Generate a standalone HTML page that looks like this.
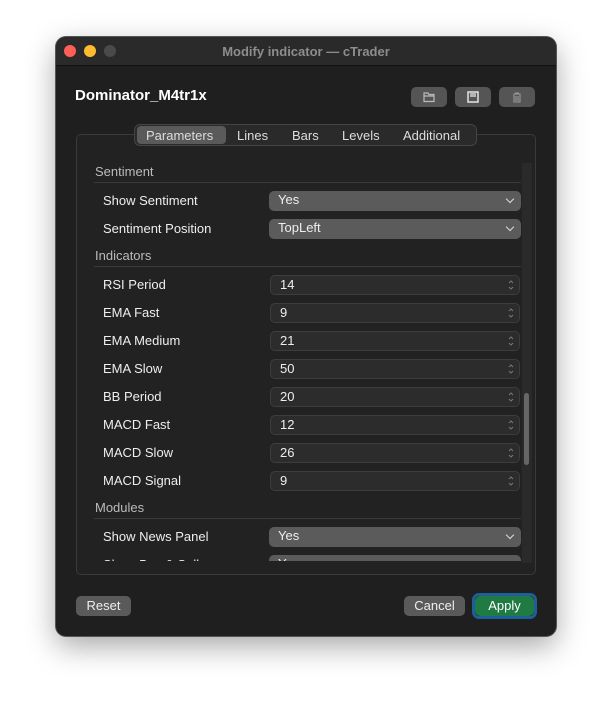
<!DOCTYPE html>
<html><head><style>
*{margin:0;padding:0;box-sizing:border-box}
body{width:612px;height:710px;background:#fff;font-family:"Liberation Sans",sans-serif;position:relative;overflow:hidden}
.win{position:absolute;left:56px;top:37px;width:500px;height:599px;background:#1f1f1f;border-radius:10px;box-shadow:0 0 0 1px #555,0 10px 30px rgba(0,0,0,.35);overflow:hidden}
.tb{position:absolute;left:0;top:0;width:100%;height:29px;background:#2a2a2a;border-bottom:1px solid #111}
.dot{position:absolute;top:8px;width:12px;height:12px;border-radius:50%}
.title{position:absolute;top:7px;width:100%;text-align:center;color:#8d8d8d;font-size:13px;font-weight:bold}
.a{position:absolute}
.ib{position:absolute;top:50px;width:36px;height:20px;background:#555;border-radius:5px}
.panel{position:absolute;left:20px;top:97px;width:460px;height:441px;border:1px solid #3a3a3a;border-radius:5px;background:#222}
.tabs{position:absolute;left:78px;top:87px;width:343px;height:22px;background:#2a2a2a;border:1px solid #444;border-radius:6px;font-size:13px;color:#ddd}
.tabs span{position:absolute;top:3px}
.sec{position:absolute;left:39px;color:#bbb;font-size:13px}
.ln{position:absolute;left:38px;width:427px;height:1px;background:#3a3a3a}
.lb{position:absolute;left:47px;color:#eee;font-size:13px}
.dd{position:absolute;left:213px;width:252px;height:20px;background:#5b5b5b;border-radius:5px;color:#eee;font-size:13px;padding:1px 9px}
.dd:after{content:"";position:absolute;right:8px;top:5px;width:5px;height:5px;border-right:1.5px solid #ddd;border-bottom:1.5px solid #ddd;transform:rotate(45deg)}
.nf{position:absolute;left:214px;width:250px;height:20px;background:#2c2c2c;border:1px solid #3d3d3d;border-radius:5px;color:#eee;font-size:13px;padding:1px 9px}
.nf svg{position:absolute;right:5px;top:3px}
.btn{position:absolute;top:559px;height:20px;background:#5a5a5a;border-radius:5px;color:#eee;font-size:13px;text-align:center;padding-top:2px}
</style></head><body>
<div class="win">
<div class="tb">
<div class="dot" style="left:8px;background:#fe5f57"></div>
<div class="dot" style="left:28px;background:#febc2e"></div>
<div class="dot" style="left:48px;background:#4a4a4a"></div>
<div class="title">Modify indicator — cTrader</div>
</div>
<div class="a" style="left:19px;top:50px;color:#fff;font-size:15px;font-weight:bold">Dominator_M4tr1x</div>
<div class="ib" style="left:355px"><svg width="36" height="20"><path d="M13 6h4l1 1.5h5v7h-10z M13 9h10" stroke="#bbb" fill="none" stroke-width="1.2"/></svg></div>
<div class="ib" style="left:399px"><svg width="36" height="20"><rect x="13" y="5" width="10" height="10" fill="none" stroke="#eee" stroke-width="1.4"/><path d="M15 7h6M15 9h6" stroke="#eee" stroke-width="1.2"/></svg></div>
<div class="ib" style="left:443px"><svg width="36" height="20"><path d="M14.5 7h7M16 6h4M15 7v8h6V7M17 9v5M19 9v5" stroke="#999" fill="none" stroke-width="1.1"/></svg></div>
<div class="panel"></div>
<div class="tabs">
<div class="a" style="left:2px;top:1px;width:89px;height:18px;background:#5a5a5a;border-radius:4px"></div>
<span style="left:11px">Parameters</span><span style="left:102px">Lines</span><span style="left:157px">Bars</span><span style="left:207px">Levels</span><span style="left:268px">Additional</span>
</div>
<div class="a" style="left:466px;top:126px;width:10px;height:400px;background:#2a2a2a"></div>
<div class="a" style="left:468px;top:356px;width:5px;height:72px;background:#666;border-radius:3px"></div>
<div class="a" style="left:21px;top:120px;width:444px;height:404px;overflow:hidden">
<div style="position:absolute;left:-21px;top:-121px;width:500px;height:700px">
<div class="sec" style="top:128px">Sentiment</div><div class="ln" style="top:146px"></div>
<div class="lb" style="top:157px">Show Sentiment</div><div class="dd" style="top:155px">Yes</div>
<div class="lb" style="top:185px">Sentiment Position</div><div class="dd" style="top:183px">TopLeft</div>
<div class="sec" style="top:212px">Indicators</div><div class="ln" style="top:230px"></div>
<div class="lb" style="top:241px">RSI Period</div><div class="nf" style="top:239px">14<svg width="6" height="12"><path d="M1 4l2-2 2 2M1 8l2 2 2-2" stroke="#777" fill="none"/></svg></div>
<div class="lb" style="top:269px">EMA Fast</div><div class="nf" style="top:267px">9<svg width="6" height="12"><path d="M1 4l2-2 2 2M1 8l2 2 2-2" stroke="#777" fill="none"/></svg></div>
<div class="lb" style="top:297px">EMA Medium</div><div class="nf" style="top:295px">21<svg width="6" height="12"><path d="M1 4l2-2 2 2M1 8l2 2 2-2" stroke="#777" fill="none"/></svg></div>
<div class="lb" style="top:325px">EMA Slow</div><div class="nf" style="top:323px">50<svg width="6" height="12"><path d="M1 4l2-2 2 2M1 8l2 2 2-2" stroke="#777" fill="none"/></svg></div>
<div class="lb" style="top:353px">BB Period</div><div class="nf" style="top:351px">20<svg width="6" height="12"><path d="M1 4l2-2 2 2M1 8l2 2 2-2" stroke="#777" fill="none"/></svg></div>
<div class="lb" style="top:381px">MACD Fast</div><div class="nf" style="top:379px">12<svg width="6" height="12"><path d="M1 4l2-2 2 2M1 8l2 2 2-2" stroke="#777" fill="none"/></svg></div>
<div class="lb" style="top:409px">MACD Slow</div><div class="nf" style="top:407px">26<svg width="6" height="12"><path d="M1 4l2-2 2 2M1 8l2 2 2-2" stroke="#777" fill="none"/></svg></div>
<div class="lb" style="top:437px">MACD Signal</div><div class="nf" style="top:435px">9<svg width="6" height="12"><path d="M1 4l2-2 2 2M1 8l2 2 2-2" stroke="#777" fill="none"/></svg></div>
<div class="sec" style="top:464px">Modules</div><div class="ln" style="top:482px"></div>
<div class="lb" style="top:493px">Show News Panel</div><div class="dd" style="top:491px">Yes</div>
<div class="lb" style="top:521px">Show Buy &amp; Sell</div><div class="dd" style="top:519px">Yes</div>
</div></div>
<div class="btn" style="left:20px;width:55px">Reset</div>
<div class="btn" style="left:348px;width:61px">Cancel</div>
<div class="a" style="left:416px;top:556px;width:65px;height:26px;border:3px solid #1f5f99;border-radius:7px"></div>
<div class="btn" style="left:419px;width:59px;background:#1f7a44;color:#fff">Apply</div>
</div>
</body></html>
